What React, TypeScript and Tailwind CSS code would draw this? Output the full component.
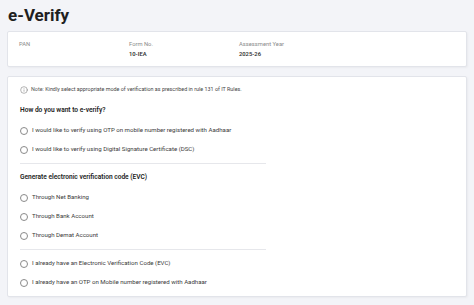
import { Info } from 'lucide-react'

const font = { fontFamily: 'Roboto, "Liberation Sans", sans-serif' }

function Radio({ label }: { label: string }) {
  return (
    <label className="flex h-[19px] items-center gap-[4px]">
      <span className="h-[8px] w-[8px] shrink-0 rounded-full border border-[#8a8a8a] bg-white" />
      <span className="text-[6.1px] leading-none text-[#3a3a3a]">{label}</span>
    </label>
  )
}

export default function App() {
  return (
    <div className="h-[305px] w-[474px] overflow-hidden bg-[#f3f4f8]" style={font}>
      <div className="px-[7px] pt-[5px]">
        {/* Title */}
        <h1 className="pl-[1px] text-[17px] font-bold leading-[20px] text-[#1f1f1f]">e-Verify</h1>

        {/* Summary card */}
        <div className="mt-[6px] grid h-[36px] grid-cols-[110px_110px_1fr] rounded-[2px] border border-[#e2e4ea] bg-white pl-[11px] pt-[8px] shadow-[1px_1px_2px_rgba(0,0,0,0.04)]">
          <div>
            <p className="text-[5.8px] leading-[8px] text-[#8a8a8a]">PAN</p>
          </div>
          <div>
            <p className="text-[5.8px] leading-[8px] text-[#8a8a8a]">Form No.</p>
            <p className="mt-[2px] text-[5.8px] font-semibold leading-[8px] text-[#333]">10-IEA</p>
          </div>
          <div>
            <p className="text-[5.8px] leading-[8px] text-[#8a8a8a]">Assessment Year</p>
            <p className="mt-[2px] text-[5.8px] font-semibold leading-[8px] text-[#333]">2025-26</p>
          </div>
        </div>

        {/* Verification options */}
        <div className="mt-[9px] flex h-[221px] flex-col rounded-[2px] border border-[#e2e4ea] bg-white px-[12px] pt-[7px] shadow-[1px_1px_2px_rgba(0,0,0,0.04)]">
          <div className="flex h-[12px] items-center gap-[3px]">
            <Info className="h-[8px] w-[8px] text-[#6b6b6b]" strokeWidth={1.5} />
            <p className="text-[5.4px] leading-none text-[#444]">
              <span className="text-[#555]">Note:</span> Kindly select appropriate mode of verification as prescribed in rule 131 of IT Rules.
            </p>
          </div>

          <h2 className="mt-[9px] flex h-[12px] items-center text-[6.6px] font-semibold text-[#222]">
            How do you want to e-verify?
          </h2>
          <div className="mt-[4px] flex flex-col">
            <Radio label="I would like to verify using OTP on mobile number registered with Aadhaar" />
            <Radio label="I would like to verify using Digital Signature Certificate (DSC)" />
          </div>

          <div className="mt-[4px] h-px w-[246px] bg-[#e6e7eb]" />

          <h2 className="mt-[8px] flex h-[12px] items-center text-[6.6px] font-semibold text-[#222]">
            Generate electronic verification code (EVC)
          </h2>
          <div className="mt-[4px] flex flex-col">
            <Radio label="Through Net Banking" />
            <Radio label="Through Bank Account" />
            <Radio label="Through Demat Account" />
          </div>

          <div className="mt-[4px] h-px w-[246px] bg-[#e6e7eb]" />

          <div className="mt-[4px] flex flex-col">
            <Radio label="I already have an Electronic Verification Code (EVC)" />
            <Radio label="I already have an OTP on Mobile number registered with Aadhaar" />
          </div>
        </div>
      </div>
    </div>
  )
}
